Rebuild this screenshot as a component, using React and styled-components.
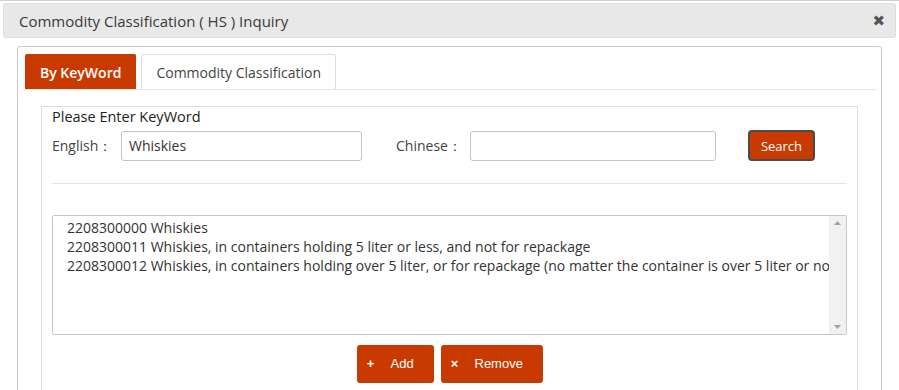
import React from "react"
import styled, { createGlobalStyle } from "styled-components"

const GlobalStyle = createGlobalStyle`
  html, body {
    margin: 0;
    padding: 0;
    background: #fff;
  }
  body {
    font-family: "Open Sans", "Noto Sans", sans-serif;
    color: #333;
  }
`

const red = "#c83a00"

const Modal = styled.div`
  width: 899px;
  height: 390px;
  box-sizing: border-box;
  border-top: 1px solid #cfcfcf;
  padding: 2px 3px 0 3px;
  overflow: hidden;
`

const Header = styled.div`
  height: 35px;
  box-sizing: border-box;
  background: #e8e8e8;
  border: 1px solid #dedede;
  border-radius: 3px;
  display: flex;
  align-items: center;
  justify-content: space-between;
  padding: 0 10px 0 15px;
  font-size: 15px;
  color: #3a3a3a;
`

const Close = styled.span`
  font-size: 15px;
  font-weight: bold;
  color: #555;
  font-family: "DejaVu Sans", sans-serif;
`

const Panel = styled.div`
  margin: 8px 14px 0 14px;
  border: 1px solid #cccccc;
  border-radius: 3px;
  height: 360px;
  padding: 7px 4px 0 4px;
`

const TabRow = styled.div`
  display: flex;
  gap: 5px;
  border-bottom: 1px solid #e3e3e3;
  padding-left: 3px;
  border-radius: 0 0 3px 3px;
`

const Tab = styled.div`
  height: 35px;
  box-sizing: border-box;
  display: flex;
  align-items: center;
  padding: 0 14px;
  font-size: 14px;
  border: 1px solid ${p => (p.$active ? red : "#dddddd")};
  border-bottom: none;
  background: ${p => (p.$active ? red : "#fff")};
  color: ${p => (p.$active ? "#fff" : "#444")};
  font-weight: ${p => (p.$active ? 600 : 400)};
  border-radius: 2px 2px 0 0;
`

const Fieldset = styled.div`
  margin: 16px 19px 0 19px;
  border: 1px solid #dddddd;
  border-bottom: none;
  padding: 0 10px 0 10px;
  height: 300px;
`

const Legend = styled.div`
  font-size: 14.5px;
  color: #222;
  line-height: 20px;
`

const FormRow = styled.div`
  display: flex;
  align-items: center;
  margin-top: 3px;
  height: 31px;
`

const Label = styled.span`
  font-size: 14px;
  color: #444;
  width: ${p => p.$w}px;
`

const Input = styled.div`
  width: ${p => p.$w}px;
  height: 30px;
  box-sizing: border-box;
  border: 1px solid #c4c4c4;
  border-radius: 3px;
  display: flex;
  align-items: center;
  padding-left: 7px;
  font-size: 14px;
  color: #333;
`

const Gap = styled.span`
  width: ${p => p.$w}px;
`

const SearchButton = styled.div`
  width: 67px;
  height: 31px;
  box-sizing: border-box;
  border: 2px solid #4a4a4a;
  border-radius: 4px;
  background: ${red};
  color: #fff;
  font-size: 13px;
  display: flex;
  align-items: center;
  justify-content: center;
`

const Rule = styled.div`
  border-top: 1px solid #e5e5e5;
  margin-top: 22px;
`

const ListBox = styled.div`
  margin-top: 31px;
  height: 120px;
  box-sizing: border-box;
  border: 1px solid #c8c8c8;
  border-radius: 2px;
  display: flex;
  overflow: hidden;
`

const ListItems = styled.div`
  flex: 1;
  overflow: hidden;
  padding: 2px 0 0 14px;
`

const ListItem = styled.div`
  font-size: 14px;
  line-height: 19px;
  color: #333;
  white-space: nowrap;
`

const Scrollbar = styled.div`
  width: 17px;
  background: #f1f1f1;
  display: flex;
  flex-direction: column;
  justify-content: space-between;
  align-items: center;
  padding: 5px 0;
`

const ButtonRow = styled.div`
  display: flex;
  justify-content: center;
  gap: 7px;
  margin-top: 10px;
`

const ActionButton = styled.div`
  height: 38px;
  width: ${p => p.$w}px;
  box-sizing: border-box;
  background: ${red};
  border-radius: 3px;
  color: #fff;
  font-family: "Liberation Sans", Arial, sans-serif;
  font-size: 13px;
  display: flex;
  align-items: center;
  padding-left: 10px;
  padding-bottom: 2px;
  gap: 16px;
`

const ButtonIcon = styled.span`
  font-weight: bold;
  font-size: 13px;
  width: 8px;
  text-align: center;
`

const Arrow = ({ up }) => (
  <svg width="7" height="4" viewBox="0 0 7 4">
    <path d={up ? "M0 4 L3.5 0 L7 4 Z" : "M0 0 L3.5 4 L7 0 Z"} fill="#a3a3a3" />
  </svg>
)

const results = [
  "2208300000 Whiskies",
  "2208300011 Whiskies, in containers holding 5 liter or less, and not for repackage",
  "2208300012 Whiskies, in containers holding over 5 liter, or for repackage (no matter the container is over 5 liter or not)",
]

const App = () => (
  <>
    <GlobalStyle />
    <Modal>
      <Header>
        <span>Commodity Classification ( HS ) Inquiry</span>
        <Close>✖</Close>
      </Header>
      <Panel>
        <TabRow>
          <Tab $active>By KeyWord</Tab>
          <Tab>Commodity Classification</Tab>
        </TabRow>
        <Fieldset>
          <Legend>Please Enter KeyWord</Legend>
          <FormRow>
            <Label $w={69}>English：</Label>
            <Input $w={241}>Whiskies</Input>
            <Gap $w={34} />
            <Label $w={74}>Chinese：</Label>
            <Input $w={246} />
            <Gap $w={32} />
            <SearchButton>Search</SearchButton>
          </FormRow>
          <Rule />
          <ListBox>
            <ListItems>
              {results.map(r => (
                <ListItem key={r}>{r}</ListItem>
              ))}
            </ListItems>
            <Scrollbar>
              <Arrow up />
              <Arrow />
            </Scrollbar>
          </ListBox>
          <ButtonRow>
            <ActionButton $w={77}>
              <ButtonIcon>+</ButtonIcon>Add
            </ActionButton>
            <ActionButton $w={102}>
              <ButtonIcon>×</ButtonIcon>Remove
            </ActionButton>
          </ButtonRow>
        </Fieldset>
      </Panel>
    </Modal>
  </>
)

export default App
